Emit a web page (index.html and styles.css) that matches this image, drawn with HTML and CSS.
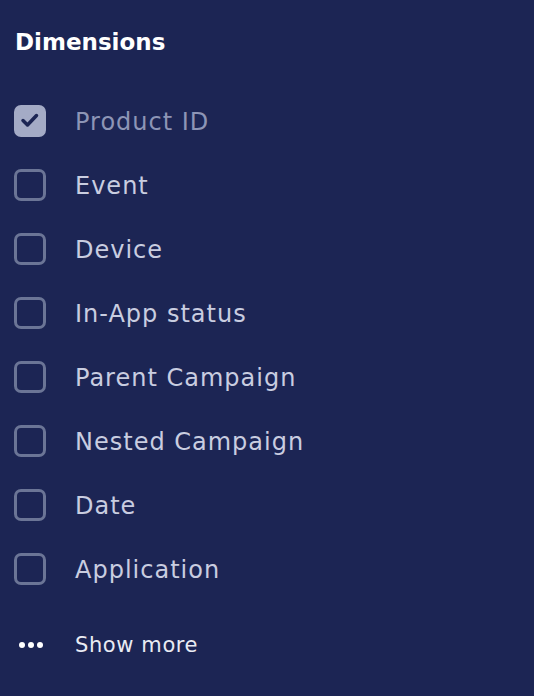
FILE: index.html
```html
<html>
<head>
    <title>Dimensions</title>
    <link rel="stylesheet" href="styles.css">
</head>
<body>
<div class="panel">
    <div class="title">Dimensions</div>
    <ul class="options">
        <li class="option checked"><span class="box"><svg viewBox="0 0 32 32" width="32" height="32"><path d="M9 15.5l4.5 4.5 9-9.5" fill="none" stroke="#1c2554" stroke-width="3.5" stroke-linecap="round" stroke-linejoin="round"/></svg></span><span class="label">Product ID</span></li>
        <li class="option"><span class="box"></span><span class="label">Event</span></li>
        <li class="option"><span class="box"></span><span class="label">Device</span></li>
        <li class="option"><span class="box"></span><span class="label">In-App status</span></li>
        <li class="option"><span class="box"></span><span class="label">Parent Campaign</span></li>
        <li class="option"><span class="box"></span><span class="label">Nested Campaign</span></li>
        <li class="option"><span class="box"></span><span class="label">Date</span></li>
        <li class="option"><span class="box"></span><span class="label">Application</span></li>
    </ul>
    <div class="more">
        <svg class="dots" viewBox="0 0 61 8" width="61" height="8"><circle cx="8" cy="4" r="3" fill="#fff"/><circle cx="17" cy="4" r="3" fill="#fff"/><circle cx="26" cy="4" r="3" fill="#fff"/></svg>
        <span class="more-text">Show more</span>
    </div>
</div>
</body>
</html>
```

FILE: styles.css
```css
*{
    margin: 0;
    padding: 0;
    box-sizing: border-box;
}
html, body{
    height: 100%;
    background: #1c2554;
}
body{
    font-family: 'DejaVu Sans', sans-serif;
}
.panel{
    padding: 27px 14px 0 14px;
}
.title{
    color: #fff;
    font-weight: 700;
    font-size: 23px;
    line-height: 30px;
    padding-left: 1px;
    margin-bottom: 48px;
}
.options{
    list-style: none;
}
.option{
    display: flex;
    align-items: center;
    height: 32px;
    margin-bottom: 32px;
}
.box{
    width: 32px;
    height: 32px;
    border: 3px solid #6b7596;
    border-radius: 7px;
    flex: none;
}
.checked .box{
    background: #a4abc6;
    border-color: #a4abc6;
    display: flex;
    align-items: center;
    justify-content: center;
}
.checked .box svg{
    flex: none;
}
.label{
    margin-left: 29px;
    padding-top: 2px;
    font-size: 24px;
    color: #c9cde0;
    letter-spacing: 1px;
}
.checked .label{
    color: #8d95b6;
}
.more{
    display: flex;
    align-items: center;
    color: #e9ebf3;
    font-size: 21px;
    margin-top: 47px;
    letter-spacing: 0.6px;
}
.more .dots{
    flex: none;
}
.more-text{
    padding-top: 1px;
}
```
